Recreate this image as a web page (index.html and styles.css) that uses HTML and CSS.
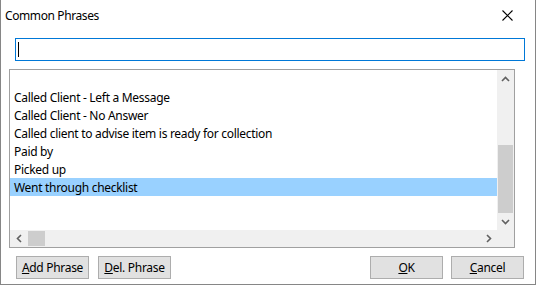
FILE: index.html
```html
<!DOCTYPE html>
<html lang="en">
  <head>
    <meta charset="UTF-8" />
    <meta name="viewport" content="width=device-width, initial-scale=1.0" />
    <title>Common Phrases</title>
    <link rel="stylesheet" href="styles.css">
  </head>
  <body>
    <div class="dialog">
      <div class="titlebar">
        <span class="title">Common Phrases</span>
        <svg class="close" width="11" height="11" viewBox="0 0 11 11">
          <path d="M0.5 0.5 L10.5 10.5 M10.5 0.5 L0.5 10.5" stroke="#000" stroke-width="1.1" fill="none" />
        </svg>
      </div>

      <div class="search">
        <span class="caret"></span>
      </div>

      <div class="listbox">
        <div class="list-main">
          <div class="items">
            <div class="item"></div>
            <div class="item">Called Client - Left a Message</div>
            <div class="item">Called Client - No Answer</div>
            <div class="item">Called client to advise item is ready for collection</div>
            <div class="item">Paid by</div>
            <div class="item">Picked up</div>
            <div class="item selected">Went through checklist</div>
          </div>
          <div class="vscroll">
            <div class="arrow">
              <svg width="9" height="6" viewBox="0 0 9 6"><path d="M1 5 L4.5 1.5 L8 5" stroke="#606060" stroke-width="1.6" fill="none" /></svg>
            </div>
            <div class="vtrack"><div class="vthumb"></div></div>
            <div class="arrow">
              <svg width="9" height="6" viewBox="0 0 9 6"><path d="M1 1 L4.5 4.5 L8 1" stroke="#606060" stroke-width="1.6" fill="none" /></svg>
            </div>
          </div>
        </div>
        <div class="hscroll">
          <div class="arrow">
            <svg width="6" height="9" viewBox="0 0 6 9"><path d="M5 1 L1.5 4.5 L5 8" stroke="#606060" stroke-width="1.6" fill="none" /></svg>
          </div>
          <div class="htrack"><div class="hthumb"></div></div>
          <div class="arrow">
            <svg width="6" height="9" viewBox="0 0 6 9"><path d="M1 1 L4.5 4.5 L1 8" stroke="#606060" stroke-width="1.6" fill="none" /></svg>
          </div>
          <div class="corner"></div>
        </div>
      </div>

      <div class="buttons">
        <div class="group">
          <button><u>A</u>dd Phrase</button>
          <button><u>D</u>el. Phrase</button>
        </div>
        <div class="group right">
          <button><u>O</u>K</button>
          <button><u>C</u>ancel</button>
        </div>
      </div>
    </div>
  </body>
</html>
```

FILE: styles.css
```css
body {
  margin: 0;
  background: #fff;
  font-family: "Noto Sans", "Liberation Sans", sans-serif;
  font-size: 12px;
  letter-spacing: -0.3px;
  color: #000;
}
.dialog {
  width: 536px;
  height: 285px;
  box-sizing: border-box;
  border: 1px solid #868686;
  border-top: none;
  background: #fff;
  display: flex;
  flex-direction: column;
}
.titlebar {
  height: 30px;
  display: flex;
  align-items: center;
  justify-content: space-between;
  padding-left: 4px;
  padding-right: 22px;
}
.title {
  font-size: 12px;
  letter-spacing: -0.4px;
}
.search {
  margin: 8px 0 0 14px;
  width: 510px;
  height: 23px;
  box-sizing: border-box;
  border: 1px solid #0078d7;
  display: flex;
  align-items: center;
  padding-left: 2px;
}
.caret {
  width: 1px;
  height: 15px;
  background: #000;
}
.listbox {
  margin: 8px 0 0 8px;
  width: 506px;
  height: 179px;
  box-sizing: border-box;
  border: 1px solid #a0a0a0;
  display: flex;
  flex-direction: column;
}
.list-main {
  flex: 1;
  display: flex;
}
.items {
  flex: 1;
  overflow: hidden;
}
.item {
  height: 18px;
  line-height: 19px;
  padding-left: 4px;
  white-space: nowrap;
}
.item.selected {
  background: #99d1ff;
}
.vscroll {
  width: 17px;
  background: #f0f0f0;
  display: flex;
  flex-direction: column;
}
.arrow {
  width: 17px;
  height: 17px;
  display: flex;
  align-items: center;
  justify-content: center;
  flex-shrink: 0;
}
.vtrack {
  flex: 1;
  display: flex;
  flex-direction: column;
  justify-content: flex-end;
}
.vthumb {
  height: 68px;
  margin: 0 1px;
  background: #cdcdcd;
}
.hscroll {
  height: 17px;
  background: #f0f0f0;
  display: flex;
}
.htrack {
  flex: 1;
  display: flex;
  align-items: stretch;
}
.hthumb {
  width: 17px;
  margin: 1px 0 1px 1px;
  background: #cdcdcd;
}
.corner {
  width: 17px;
  background: #f0f0f0;
}
.buttons {
  margin-top: 8px;
  display: flex;
  justify-content: space-between;
  padding: 0 11px 0 15px;
}
.group {
  display: flex;
  gap: 9px;
}
.group.right {
  gap: 8px;
}
button {
  width: 73px;
  height: 23px;
  padding: 0;
  border: 1px solid #adadad;
  background: #e1e1e1;
  font-family: inherit;
  font-size: 12px;
  letter-spacing: -0.3px;
  color: #000;
}
```
